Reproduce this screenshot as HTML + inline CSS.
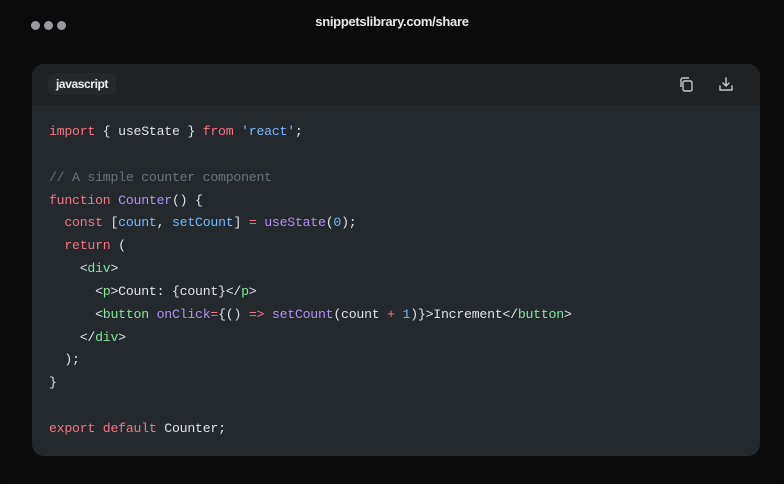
<!DOCTYPE html>
<html><head><style>
html,body{margin:0;padding:0;width:784px;height:484px;overflow:hidden;background:#0a0a0b;}
.frame{position:absolute;left:0;top:0;width:784px;height:484px;background:#0b0b0c;border-radius:14px;}
.dots{position:absolute;left:31px;top:17px;}
.dots span{display:inline-block;width:9px;height:9px;border-radius:50%;background:#9a9a9c;margin-right:4px;}
.url{position:absolute;left:0;width:784px;top:14px;text-align:center;color:#e8e8e8;font:bold 13px "Liberation Sans",sans-serif;letter-spacing:-0.3px;}
.card{position:absolute;left:32px;top:64px;width:728px;height:392px;border-radius:12px;overflow:hidden;background:#24292e;}
.head{height:41px;background:#1f2123;position:relative;}
.tag{position:absolute;left:16px;top:9px;height:22px;padding:0 8px;border-radius:6px;background:#272829;color:#eee;font:bold 12px "Liberation Sans",sans-serif;line-height:22px;letter-spacing:-0.4px;}
pre{margin:0;position:absolute;left:17px;top:57px;font:13.2px/22.85px "Liberation Mono",monospace;letter-spacing:-0.23px;color:#e1e4e8;}
.k{color:#f97583}.f{color:#b392f0}.s{color:#79b8ff}.c{color:#6a737d}.t{color:#85e89d}.v{color:#79b8ff}
svg{position:absolute;}
</style></head><body>
<div class="frame"></div>
<div class="dots"><span></span><span></span><span></span></div>
<div class="url">snippetslibrary.com/share</div>
<div class="card">
<div class="head"><div class="tag">javascript</div>
<svg style="left:646px;top:12px" width="16" height="16" viewBox="0 0 16 16" fill="none" stroke="#c8c8c8" stroke-width="1.4"><rect x="5" y="5" width="9" height="10" rx="1.5"/><path d="M3 11V3.5A1.5 1.5 0 0 1 4.5 2H11"/></svg>
<svg style="left:686px;top:12px" width="16" height="16" viewBox="0 0 16 16" fill="none" stroke="#c8c8c8" stroke-width="1.4" stroke-linecap="round"><path d="M8 2v8M5 7l3 3 3-3M2 10v4h12v-4"/></svg>
</div>
<pre><span class="k">import</span> { useState } <span class="k">from</span> <span class="s">'react'</span>;

<span class="c">// A simple counter component</span>
<span class="k">function</span> <span class="f">Counter</span>() {
  <span class="k">const</span> [<span class="v">count</span>, <span class="v">setCount</span>] <span class="k">=</span> <span class="f">useState</span>(<span class="v">0</span>);
  <span class="k">return</span> (
    &lt;<span class="t">div</span>&gt;
      &lt;<span class="t">p</span>&gt;Count: {count}&lt;/<span class="t">p</span>&gt;
      &lt;<span class="t">button</span> <span class="f">onClick</span><span class="k">=</span>{() <span class="k">=&gt;</span> <span class="f">setCount</span>(count <span class="k">+</span> <span class="v">1</span>)}&gt;Increment&lt;/<span class="t">button</span>&gt;
    &lt;/<span class="t">div</span>&gt;
  );
}

<span class="k">export</span> <span class="k">default</span> Counter;</pre>
</div>
</body></html>
